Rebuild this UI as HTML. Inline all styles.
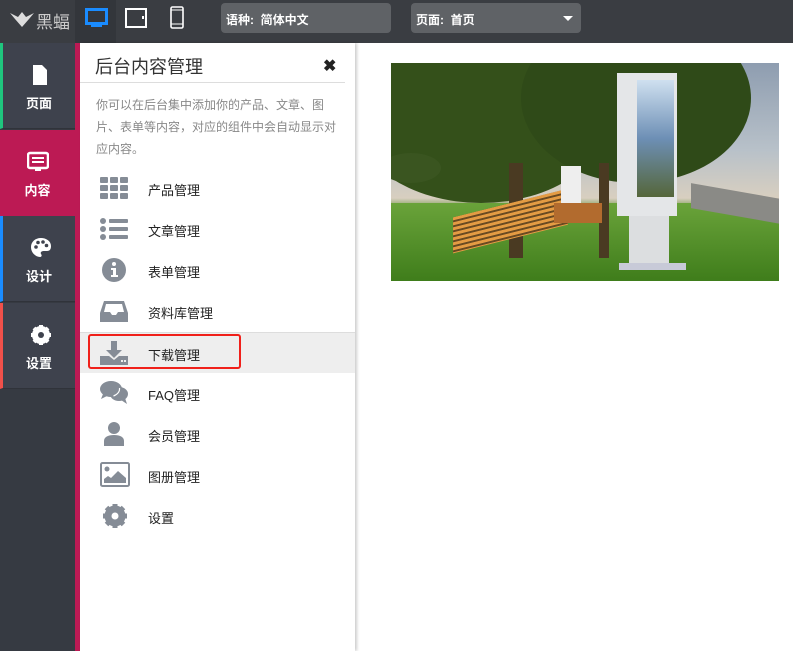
<!DOCTYPE html>
<html><head><meta charset="utf-8"><style>
*{margin:0;padding:0;box-sizing:border-box}
body{width:793px;height:651px;overflow:hidden;background:#fff;font-family:"Liberation Sans","Noto Sans CJK SC",sans-serif;position:relative}
.top{position:absolute;left:0;top:0;width:793px;height:43px;background:#3a3d42}
.abs{position:absolute}
.nav{position:absolute;left:0;top:43px;width:75px;height:608px;background:#363a42}
.ni{position:absolute;left:0;width:75px;height:86px;background:#3e424d;color:#fff;font-size:13px;font-weight:bold;text-align:center;border-bottom:1px solid #30333a}
.ni span{position:absolute;left:0;right:0;top:50px}
.ni svg{position:absolute;left:27px;top:21px}
.row{position:absolute;left:80px;width:275px;height:41px;font-size:13px;color:#222}
.row .t{position:absolute;left:68px;top:12px}
.row svg{position:absolute;left:20px;top:7px}
</style></head><body>
<div class="top"></div>
<div class="abs" style="left:75px;top:0;width:41px;height:43px;background:#33363b"></div>
<svg class="abs" style="left:9px;top:9px" width="26" height="20" viewBox="0 0 26 20"><path d="M1 4 L9 8 L13 3 L17 8 L25 4 L20 10 L13 18 L6 10Z" fill="#ddd"/></svg>
<div class="abs" style="left:36px;top:8px;color:#ccc;font-size:17px">黑蝠</div>
<svg class="abs" style="left:85px;top:8px" width="23" height="20"><rect x="1.5" y="1.5" width="20" height="14" fill="none" stroke="#1a8cff" stroke-width="3"/><rect x="6" y="16" width="11" height="3" fill="#1a8cff"/></svg>
<svg class="abs" style="left:125px;top:8px" width="22" height="20"><rect x="1" y="1" width="20" height="18" fill="none" stroke="#fff" stroke-width="2"/><rect x="17" y="8" width="2" height="3" fill="#fff"/></svg>
<svg class="abs" style="left:170px;top:6px" width="14" height="23"><rect x="1" y="1" width="12" height="21" rx="1.5" fill="none" stroke="#fff" stroke-width="1.6"/><line x1="1" y1="4" x2="13" y2="4" stroke="#fff"/><line x1="1" y1="18" x2="13" y2="18" stroke="#fff"/></svg>
<div class="abs" style="left:221px;top:3px;width:170px;height:30px;background:#5f6266;border-radius:4px;color:#fff;font-size:12px;font-weight:bold;padding:8px 5px">语种: &nbsp;简体中文</div>
<div class="abs" style="left:411px;top:3px;width:170px;height:30px;background:#5f6266;border-radius:4px;color:#fff;font-size:12px;font-weight:bold;padding:8px 5px">页面: &nbsp;首页</div>
<div class="abs" style="left:563px;top:16px;border:5px solid transparent;border-top:5px solid #fff;border-bottom:0"></div>

<div class="nav"></div>
<div class="ni" style="top:43px;border-left:3px solid #1fc67e"><svg width="20" height="22" viewBox="0 0 20 22"><path d="M3 1h9l5 5v15H3z" fill="#fff"/></svg><span>页面</span></div>
<div class="ni" style="top:130px;background:#bc1a54;border:0"><svg width="22" height="22"><rect x="1" y="2" width="20" height="15" rx="2" fill="none" stroke="#fff" stroke-width="2.5"/><rect x="5" y="6" width="12" height="2" fill="#fff"/><rect x="5" y="10" width="12" height="2" fill="#fff"/><rect x="8" y="18" width="6" height="2" fill="#fff"/></svg><span>内容</span></div>
<div class="ni" style="top:216px;border-left:3px solid #1a8cff"><svg width="22" height="22" viewBox="0 0 22 22"><path d="M11 1C5 1 1 5 1 10c0 6 5 10 9 10 2 0 2-2 1-3-1-2 1-3 3-3h3c3 0 4-2 4-5 0-5-5-8-10-8z" fill="#fff"/><circle cx="6" cy="10" r="1.8" fill="#3e424d"/><circle cx="8" cy="5.5" r="1.8" fill="#3e424d"/><circle cx="13" cy="5" r="1.8" fill="#3e424d"/><circle cx="16.5" cy="8.5" r="1.8" fill="#3e424d"/></svg><span>设计</span></div>
<div class="ni" style="top:303px;border-left:3px solid #f0504a"><svg width="22" height="22" viewBox="0 0 22 22"><circle cx="11" cy="11" r="7" fill="none" stroke="#fff" stroke-width="4"/><g stroke="#fff" stroke-width="4"><line x1="11" y1="1" x2="11" y2="21"/><line x1="1" y1="11" x2="21" y2="11"/><line x1="4" y1="4" x2="18" y2="18"/><line x1="18" y1="4" x2="4" y2="18"/></g><circle cx="11" cy="11" r="3" fill="#3e424d"/></svg><span>设置</span></div>
<div class="abs" style="left:75px;top:43px;width:5px;height:608px;background:#bc1a54"></div>

<div class="abs" style="left:80px;top:43px;width:275px;height:608px;background:#fff;box-shadow:2px 0 3px rgba(0,0,0,.2)"></div>
<div class="abs" style="left:95px;top:53px;font-size:18px;color:#333">后台内容管理</div>
<div class="abs" style="left:323px;top:56px;font-size:16px;font-weight:bold;color:#222">✖</div>
<div class="abs" style="left:80px;top:82px;width:265px;height:1px;background:#ddd"></div>
<div class="abs" style="left:96px;top:94px;width:250px;font-size:12px;line-height:22px;color:#888">你可以在后台集中添加你的产品、文章、图片、表单等内容，对应的组件中会自动显示对应内容。</div>

<div class="row" style="top:168px"><svg width="30" height="26"><g fill="#858c96"><rect x="0" y="2" width="8" height="6" rx="1"/><rect x="10" y="2" width="8" height="6" rx="1"/><rect x="20" y="2" width="8" height="6" rx="1"/><rect x="0" y="10" width="8" height="6" rx="1"/><rect x="10" y="10" width="8" height="6" rx="1"/><rect x="20" y="10" width="8" height="6" rx="1"/><rect x="0" y="18" width="8" height="6" rx="1"/><rect x="10" y="18" width="8" height="6" rx="1"/><rect x="20" y="18" width="8" height="6" rx="1"/></g></svg><span class="t">产品管理</span></div>
<div class="row" style="top:209px"><svg width="30" height="26"><g fill="#858c96"><circle cx="3" cy="5" r="3"/><circle cx="3" cy="13" r="3"/><circle cx="3" cy="21" r="3"/><rect x="9" y="3" width="19" height="4" rx="1"/><rect x="9" y="11" width="19" height="4" rx="1"/><rect x="9" y="19" width="19" height="4" rx="1"/></g></svg><span class="t">文章管理</span></div>
<div class="row" style="top:250px"><svg width="30" height="26"><circle cx="14" cy="13" r="12" fill="#858c96"/><circle cx="14" cy="7" r="2" fill="#fff"/><path d="M11 11h5v7h2v2h-7v-2h2v-5h-2z" fill="#fff"/></svg><span class="t">表单管理</span></div>
<div class="row" style="top:291px"><svg width="30" height="26"><path d="M4 3h20l4 12v9H0v-9z" fill="#858c96"/><path d="M6 6h16l2 8h-6l-2 3h-4l-2-3H4z" fill="#fff"/></svg><span class="t">资料库管理</span></div>
<div class="row" style="top:332px;background:#eee;border-top:1px solid #ddd"><svg width="30" height="26"><g fill="#858c96"><rect x="11" y="1" width="6" height="10"/><path d="M6 10h16l-8 8z"/><path d="M0 16h9l5 4 5-4h9v9H0z"/></g><rect x="21" y="20" width="2" height="2" fill="#eee"/><rect x="24" y="20" width="2" height="2" fill="#eee"/></svg><span class="t">下载管理</span></div>
<div class="abs" style="left:88px;top:334px;width:153px;height:35px;border:2px solid #f0201a;border-radius:3px"></div>
<div class="row" style="top:373px"><svg width="30" height="26"><g fill="#858c96"><ellipse cx="11" cy="9" rx="11" ry="8"/><path d="M3 14l-2 5 6-3z"/><ellipse cx="19" cy="14" rx="9" ry="7"/><path d="M25 18l2 6-6-4z"/></g><path d="M19.5 8 a11 8 0 0 1 -6 8" stroke="#fff" stroke-width="1.2" fill="none"/></svg><span class="t">FAQ管理</span></div>
<div class="row" style="top:414px"><svg width="30" height="26"><g fill="#858c96"><circle cx="14" cy="7" r="6"/><path d="M4 25v-5c0-4 4-6 10-6s10 2 10 6v5z"/></g></svg><span class="t">会员管理</span></div>
<div class="row" style="top:455px"><svg width="32" height="26"><rect x="1" y="1" width="28" height="23" rx="1.5" fill="none" stroke="#858c96" stroke-width="2"/><circle cx="7" cy="7" r="2.5" fill="#858c96"/><path d="M4 21v-4l4-3 3 2 7-7 8 7v5z" fill="#858c96"/></svg><span class="t">图册管理</span></div>
<div class="row" style="top:496px"><svg width="30" height="26" viewBox="-1 -1 26 26"><circle cx="12" cy="12" r="8" fill="none" stroke="#858c96" stroke-width="5"/><g stroke="#858c96" stroke-width="5"><line x1="12" y1="0" x2="12" y2="24"/><line x1="0" y1="12" x2="24" y2="12"/><line x1="3.5" y1="3.5" x2="20.5" y2="20.5"/><line x1="20.5" y1="3.5" x2="3.5" y2="20.5"/></g><circle cx="12" cy="12" r="3.5" fill="#fff"/></svg><span class="t">设置</span></div>

<div class="abs" style="left:391px;top:63px;width:388px;height:218px;overflow:hidden;background:linear-gradient(180deg,#8e9db0 0%,#b8c1c9 40%,#d8cfc0 62%,#5a8a2c 68%,#4f8a22 100%)">
 <div class="abs" style="left:0;top:140px;width:388px;height:78px;background:linear-gradient(180deg,#6aa33a,#3f7d1b)"></div>
 <div class="abs" style="left:-40px;top:-40px;width:260px;height:180px;border-radius:50%;background:#34501a"></div>
 <div class="abs" style="left:130px;top:-50px;width:230px;height:170px;border-radius:50%;background:#2f4a18"></div>
 <div class="abs" style="left:-10px;top:90px;width:60px;height:30px;border-radius:50%;background:#3a5520"></div>
 <div class="abs" style="left:118px;top:100px;width:14px;height:95px;background:#4a3a22"></div>
 <div class="abs" style="left:208px;top:100px;width:10px;height:95px;background:#4a3a22"></div>
 <div class="abs" style="left:300px;top:128px;width:90px;height:25px;background:#8a8a86;transform:skewY(10deg)"></div>
 <div class="abs" style="left:62px;top:140px;width:115px;height:36px;background:repeating-linear-gradient(180deg,#e49b43 0 3px,#6a4a22 3px 5px);transform:skewY(-14deg)"></div>
 <div class="abs" style="left:170px;top:103px;width:20px;height:42px;background:#eee"></div>
 <div class="abs" style="left:163px;top:140px;width:48px;height:20px;background:#b26b2e"></div>
 <div class="abs" style="left:226px;top:10px;width:60px;height:143px;background:#e4e6e8"></div>
 <div class="abs" style="left:246px;top:17px;width:37px;height:117px;background:linear-gradient(180deg,#cfe0f0,#6d8fb5 50%,#55663a)"></div>
 <div class="abs" style="left:238px;top:153px;width:40px;height:52px;background:#dcdee0"></div>
 <div class="abs" style="left:228px;top:200px;width:67px;height:7px;background:#c8cad8"></div>
</div>
</body></html>
